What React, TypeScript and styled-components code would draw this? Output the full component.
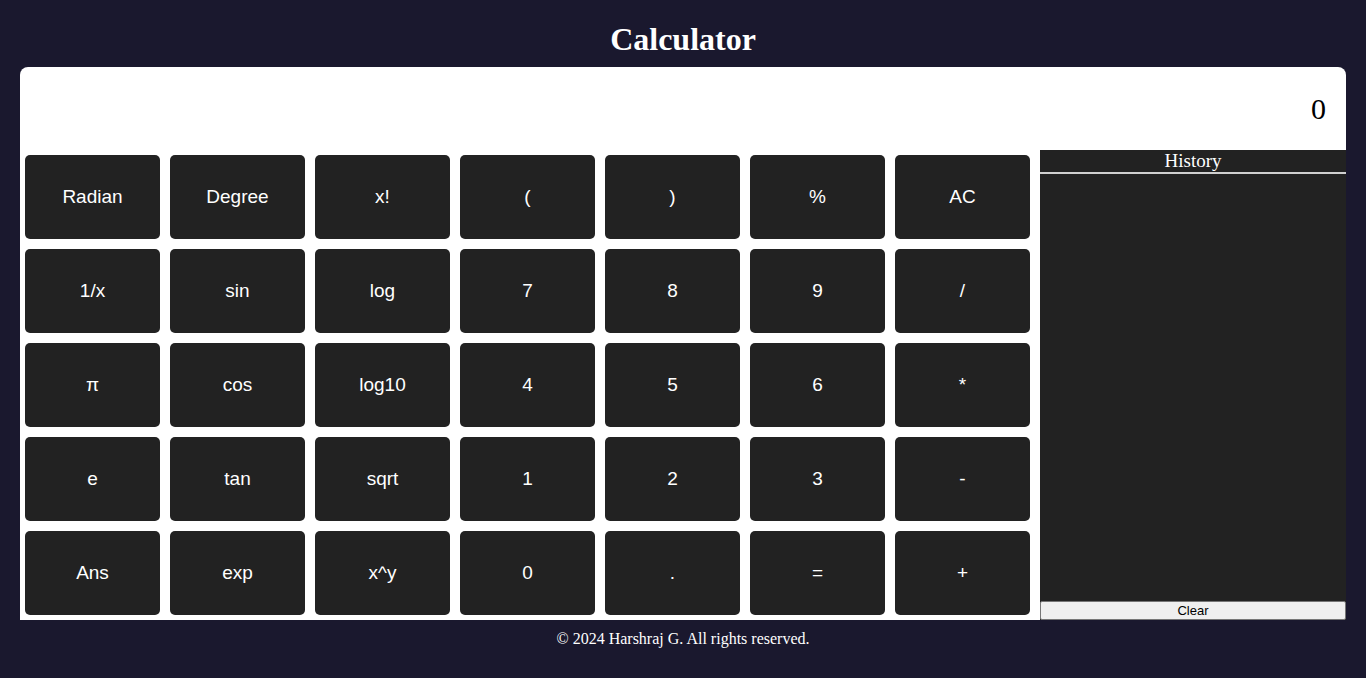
import React from "react";
import styled, { createGlobalStyle } from "styled-components";

const Global = createGlobalStyle`
  html, body { margin: 0; padding: 0; background: #1a182e; }
  body { font-family: "Liberation Serif", "Times New Roman", serif; }
`;

const Page = styled.div`
  padding: 0 20px;
  display: flex;
  flex-direction: column;
`;

const Title = styled.h1`
  margin: 0;
  height: 67px;
  display: flex;
  align-items: center;
  justify-content: center;
  padding-top: 12px;
  box-sizing: border-box;
  color: #fff;
  font-size: 32px;
  font-weight: bold;
  font-family: "Liberation Serif", serif;
`;

const Card = styled.div`
  background: #fff;
  border-radius: 8px 8px 0 0;
  display: flex;
  flex-direction: column;
`;

const Display = styled.div`
  height: 83px;
  display: flex;
  align-items: center;
  justify-content: flex-end;
  padding: 0 20px;
  font-size: 30px;
  color: #000;
  font-family: "Liberation Serif", serif;
`;

const Body = styled.div`
  display: flex;
`;

const Keys = styled.div`
  width: 1020px;
  box-sizing: border-box;
  padding: 5px 10px 5px 5px;
  display: grid;
  grid-template-columns: repeat(7, 135px);
  grid-auto-rows: 84px;
  gap: 10px;
`;

const Key = styled.button`
  border: none;
  border-radius: 5px;
  background: #222222;
  color: #fff;
  font-family: "Liberation Sans", Arial, sans-serif;
  font-size: 19px;
  cursor: pointer;
  padding: 0;
`;

const History = styled.div`
  flex: 1;
  background: #222222;
  display: flex;
  flex-direction: column;
`;

const HistoryHead = styled.div`
  height: 22px;
  color: #fff;
  text-align: center;
  font-size: 19px;
  line-height: 22px;
  border-bottom: 2px solid #d0d0d0;
  font-family: "Liberation Serif", serif;
`;

const HistoryList = styled.div`
  flex: 1;
`;

const ClearBtn = styled.button`
  height: 19px;
  background: #efefef;
  border: 1px solid #767676;
  border-radius: 2px;
  font-family: "Liberation Sans", Arial, sans-serif;
  font-size: 13px;
  color: #000;
  padding: 0;
`;

const Footer = styled.footer`
  color: #fff;
  text-align: center;
  font-size: 16px;
  padding-top: 10px;
  font-family: "Liberation Serif", serif;
`;

const keys = [
  "Radian", "Degree", "x!", "(", ")", "%", "AC",
  "1/x", "sin", "log", "7", "8", "9", "/",
  "π", "cos", "log10", "4", "5", "6", "*",
  "e", "tan", "sqrt", "1", "2", "3", "-",
  "Ans", "exp", "x^y", "0", ".", "=", "+",
];

export default function App() {
  return (
    <>
      <Global />
      <Page>
        <Title>Calculator</Title>
        <Card>
          <Display>0</Display>
          <Body>
            <Keys>
              {keys.map((k) => (
                <Key key={k}>{k}</Key>
              ))}
            </Keys>
            <History>
              <HistoryHead>History</HistoryHead>
              <HistoryList />
              <ClearBtn>Clear</ClearBtn>
            </History>
          </Body>
        </Card>
        <Footer>© 2024 Harshraj G. All rights reserved.</Footer>
      </Page>
    </>
  );
}
